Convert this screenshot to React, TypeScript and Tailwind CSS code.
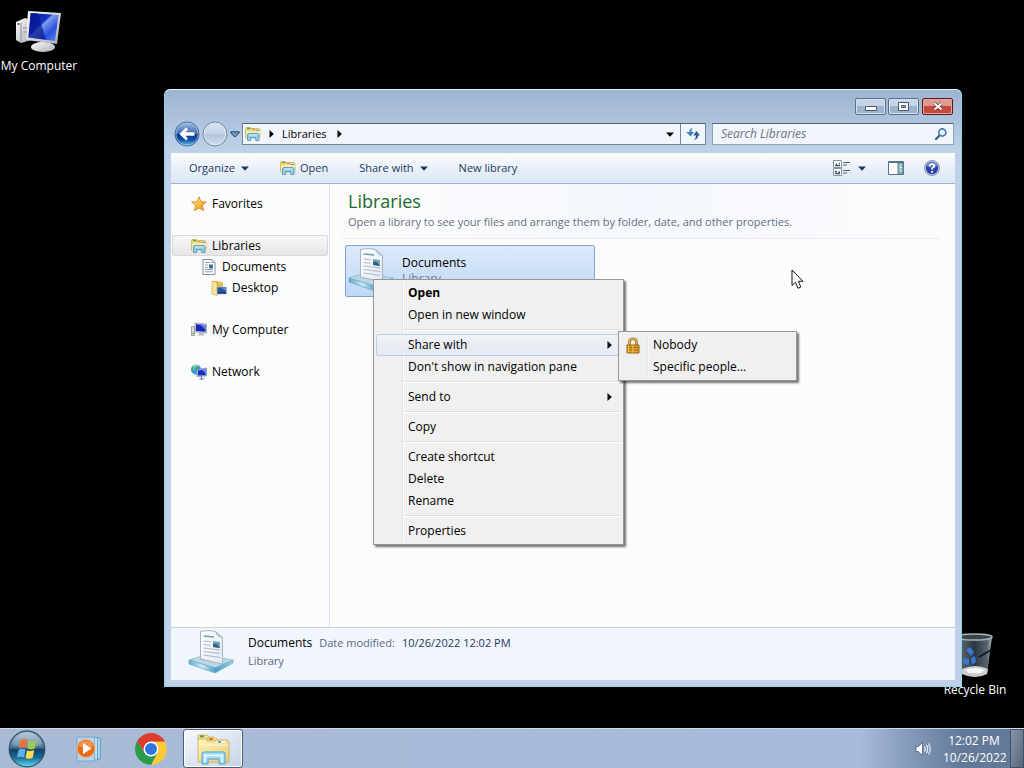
import React from "react";

// ---------- Icons ----------

type IconProps = { className?: string };

const ComputerIcon: React.FC<IconProps> = ({ className }) => (
  <svg className={className} viewBox="0 0 48 48" aria-hidden="true">
    <defs>
      <linearGradient id="pc-screen" x1="0" y1="0" x2="1" y2="1">
        <stop offset="0" stopColor="#0a1f9e" />
        <stop offset="0.4" stopColor="#1230c4" />
        <stop offset="0.45" stopColor="#7f9df0" />
        <stop offset="0.7" stopColor="#2a4fe0" />
        <stop offset="1" stopColor="#5c8cf5" />
      </linearGradient>
      <linearGradient id="pc-metal" x1="0" y1="0" x2="1" y2="1">
        <stop offset="0" stopColor="#ffffff" />
        <stop offset="1" stopColor="#a9adb3" />
      </linearGradient>
    </defs>
    <path d="M1 14 L10 10 L16 12 V32 L6 35 L1 32 Z" fill="url(#pc-metal)" />
    <path d="M6 15 V34 M8 20 H14 M8 24 H14" stroke="#8a8f96" strokeWidth="1" />
    <circle cx="3.500" cy="16" r="1" fill="#444" />
    <path d="M26 34 L35 36 L34 41 L26 41 Z" fill="#c9ccd1" />
    <ellipse cx="28" cy="39" rx="12" ry="5" fill="url(#pc-metal)" />
    <path d="M13 3 L46 5 L42 36 L11 32 Z" fill="url(#pc-metal)" />
    <path d="M15.500 5 L43.500 7 L40 33 L13.500 29.500 Z" fill="url(#pc-screen)" />
    <path d="M16 5 L23 5.600 L31 31.800 L13.500 29.500 Z" fill="#07168c" opacity="0.7" />
  </svg>
);

const SmallComputerIcon: React.FC<IconProps> = ({ className }) => (
  <svg className={className} viewBox="0 0 16 16" aria-hidden="true">
    <path d="M0.500 4.500 H3.500 V13.500 H0.500 Z" fill="#d6dade" stroke="#8d949c" strokeWidth="0.800" />
    <circle cx="2" cy="11.500" r="0.800" fill="#4fae3a" />
    <path d="M4 1 L15.500 2 V11 L4 10 Z" fill="#c8d0e4" stroke="#7d8799" strokeWidth="0.600" />
    <path d="M5 2.200 L14.500 3 V9.800 L5 9 Z" fill="#1a25b4" />
    <path d="M9 2.500 L14.500 3 V8 Z" fill="#6483ea" />
    <path d="M8.500 10.500 H12 L13.500 13.500 H6.500 Z" fill="#b4bac4" />
  </svg>
);

const NetworkIcon: React.FC<IconProps> = ({ className }) => (
  <svg className={className} viewBox="0 0 16 16" aria-hidden="true">
    <circle cx="5" cy="5.500" r="4.700" fill="#3a9ad6" stroke="#2873a8" strokeWidth="0.500" />
    <path d="M1.500 3.500 Q4 0.500 6.500 1.500 L5 4 L2 6.500 Z M5 6 L8 7 L5 9.800 Z" fill="#58c070" />
    <path d="M2 2.600 Q5 0 7 1.600" stroke="#c8f0f0" fill="none" />
    <path d="M6 5.500 L15.500 4 V12 L6 12.500 Z" fill="#b8c6e8" stroke="#5a6b94" strokeWidth="0.500" />
    <path d="M7 6.400 L14.600 5.100 V11.200 L7 11.600 Z" fill="#1730c4" />
    <path d="M11 5.700 L14.600 5.100 V9 Z" fill="#7898f0" />
    <path d="M10.500 12.500 V14.500 M8.500 15 H13" stroke="#5f748f" strokeWidth="1.200" />
  </svg>
);

const LibraryIcon: React.FC<IconProps> = ({ className }) => (
  <svg className={className} viewBox="0 0 16 16" aria-hidden="true">
    <path d="M0.500 2.500 L1 1.500 H5.500 L6.500 2.500 H14 L15 3.500 V12 H0.500 Z" fill="#eed684" stroke="#c9aa55" strokeWidth="0.700" />
    <path d="M2 2.500 H5.500" stroke="#4fb043" strokeWidth="1.200" />
    <path d="M7 3.600 H10" stroke="#e98e4d" />
    <path d="M11 4.500 H14" stroke="#5e9be0" />
    <path d="M1 5 H15 V12 H1 Z" fill="#f9ebaa" />
    <path d="M2.500 14.500 V9 Q2.500 7.500 4 7.500 H12.500 Q14 7.500 14 9 V14.500 H10.700 V11.500 H5.800 V14.500 Z" fill="#8fcdea" stroke="#4d93b8" strokeWidth="0.800" />
    <path d="M4 9 H12.500" stroke="#d8f3ff" />
  </svg>
);

const ExplorerIcon: React.FC<IconProps> = ({ className }) => (
  <svg className={className} viewBox="0 0 36 34" aria-hidden="true">
    <defs>
      <linearGradient id="folder" x1="0" y1="0" x2="1" y2="1">
        <stop offset="0" stopColor="#fff3b5" />
        <stop offset="1" stopColor="#e5cf7c" />
      </linearGradient>
    </defs>
    <path d="M3 6 V3 H12 L14 5 H19 V8 H3 Z" fill="#f4de8e" stroke="#c9ab55" strokeWidth="0.700" />
    <path d="M5 4.300 H9" stroke="#3da64a" strokeWidth="2" />
    <path d="M12 6 H21 L23 8 H28 V12 H12 Z" fill="#f6e49a" stroke="#c9ab55" strokeWidth="0.700" />
    <path d="M14 7.200 H18" stroke="#df5930" strokeWidth="1.600" />
    <path d="M3 7 H12 V9 H20 V8 H32 L34 10 V30 H3 Z" fill="url(#folder)" stroke="#c9ab55" strokeWidth="0.800" />
    <path d="M22 10 H30" stroke="#fff" strokeWidth="2" />
    <path d="M23 10 H26" stroke="#3c8ad0" strokeWidth="1.600" />
    <path d="M4 13 H33" stroke="#fff6c9" />
    <path d="M7 32 V22 Q7 20 9 20 H28 Q30 20 30 22 V32 H24 V27 H13 V32 Z" fill="#a5def4" stroke="#4e9fc9" strokeWidth="1" />
    <path d="M9 23.500 H28 M10 23 V30 M27 23 V30" stroke="#e7fbff" strokeWidth="1.500" />
  </svg>
);

const StarIcon: React.FC<IconProps> = ({ className }) => (
  <svg className={className} viewBox="0 0 16 16" aria-hidden="true">
    <defs>
      <linearGradient id="star" x1="0" y1="0" x2="1" y2="1">
        <stop offset="0" stopColor="#fff2a8" />
        <stop offset="0.500" stopColor="#fbbf42" />
        <stop offset="1" stopColor="#ea8418" />
      </linearGradient>
    </defs>
    <path d="M8 0.800 L10 5.600 L15.400 6 L11.300 9.500 L12.700 14.800 L8 12 L3.300 14.800 L4.700 9.500 L0.600 6 L6 5.600 Z" fill="url(#star)" stroke="#d3842a" strokeWidth="0.800" strokeLinejoin="round" />
  </svg>
);

const DocumentIcon: React.FC<IconProps> = ({ className }) => (
  <svg className={className} viewBox="0 0 16 16" aria-hidden="true">
    <path d="M2 0.500 H11 L14 3.500 V15.500 H2 Z" fill="#fff" stroke="#8391a0" />
    <path d="M11 0.500 V3.500 H14" fill="#dfe7ee" stroke="#8391a0" strokeWidth="0.800" />
    <path d="M4 3.500 H9 M4 6 H7 M4 8.500 H7 M4 10.500 H12 M4 12.800 H12" stroke="#8d9dae" />
    <path d="M8 5.500 H12 V9.500 H8 Z" fill="#3e7199" />
  </svg>
);

const DesktopFolderIcon: React.FC<IconProps> = ({ className }) => (
  <svg className={className} viewBox="0 0 16 16" aria-hidden="true">
    <path d="M1 1 H7 L9 2 H12 V14 H1 Z" fill="#e3bd55" />
    <path d="M1 1 L6 2.500 V15.500 L1 14 Z" fill="#f9e694" stroke="#c8a446" strokeWidth="0.600" />
    <path d="M6 7 H15.500 V14 H6 Z" fill="#245799" stroke="#b9cade" strokeWidth="0.700" />
    <path d="M9 7.500 H15 V11 Z" fill="#4f8bd0" />
    <path d="M6.500 13 H15" stroke="#1a3158" />
  </svg>
);

const DocumentsLibraryIcon: React.FC<IconProps> = ({ className }) => (
  <svg className={className} viewBox="0 0 48 48" aria-hidden="true">
    <defs>
      <linearGradient id="tray" x1="0" y1="0" x2="1" y2="0">
        <stop offset="0" stopColor="#5fa9cc" />
        <stop offset="0.300" stopColor="#c9eaf5" />
        <stop offset="0.600" stopColor="#4c9fc2" />
        <stop offset="1" stopColor="#9bd3e8" />
      </linearGradient>
      <linearGradient id="sheet" x1="0" y1="0" x2="1" y2="1">
        <stop offset="0" stopColor="#ffffff" />
        <stop offset="1" stopColor="#dfe8f3" />
      </linearGradient>
    </defs>
    <path d="M2 32 L18 27 L46 32 L28 40 Z" fill="#b9d8e8" stroke="#91b4c8" strokeWidth="0.700" />
    <path d="M2 32 L28 40 L46 32 V35 L28 45 L2 36 Z" fill="url(#tray)" stroke="#6fa7c2" strokeWidth="0.700" />
    <path d="M13.500 3.500 Q24 1.500 29 4 L35.500 9.500 V36 L13.500 31 Z" fill="url(#sheet)" stroke="#a0aaba" strokeWidth="0.900" />
    <path d="M29 4 Q29.500 9 35.500 9.500 Z" fill="#c7dbe8" stroke="#98adbd" strokeWidth="0.600" />
    <path d="M16.500 8 L27 9" stroke="#6fa39d" strokeWidth="1.600" />
    <path d="M16.500 13 L23.500 13.800 M16.500 16.500 L23.500 17.300 M16.500 20 L33 22 M16.500 23.500 L33 25.500 M16.500 27 L33 29.500" stroke="#aeb7c6" strokeWidth="1" />
    <path d="M26 13 L33 14 V20 L26 19 Z" fill="#74a6bb" />
    <path d="M26 16 L29.500 15.500 L33 20 L26 19 Z" fill="#356078" />
  </svg>
);

const PadlockIcon: React.FC<IconProps> = ({ className }) => (
  <svg className={className} viewBox="0 0 16 16" aria-hidden="true">
    <path d="M4.500 8 V4.500 Q4.500 1.200 8 1.200 Q11.500 1.200 11.500 4.500 V8" fill="none" stroke="#8a6518" strokeWidth="2.600" />
    <path d="M4.500 8 V4.500 Q4.500 1.200 8 1.200 Q11.500 1.200 11.500 4.500 V8" fill="none" stroke="#e2c164" strokeWidth="1.200" />
    <path d="M2 7.500 H14 V15.500 H2 Z" fill="#e0a028" stroke="#965f0c" />
    <path d="M2.500 10 H13.500 M2.500 12.500 H13.500" stroke="#a96c10" />
    <path d="M3.500 8 V15 M8 8 V15" stroke="#f4cb5c" />
  </svg>
);

const ViewIcon: React.FC<IconProps> = ({ className }) => (
  <svg className={className} viewBox="0 0 17 16" aria-hidden="true">
    <path d="M0.500 0.500 H8.500 V7.500 H0.500 Z M0.500 8.500 H8.500 V15.500 H0.500 Z" fill="#fff" stroke="#8793a3" />
    <path d="M2 5.500 H7 M3 4 H4 M6 3.500 H7 M2 13.500 H7 M2 11.500 H4 M5.500 12 H7" stroke="#4b5663" strokeWidth="1.300" />
    <path d="M10 2.500 H17 M10 5 H14 M10 10.500 H17 M10 13 H14" stroke="#566273" />
  </svg>
);

const PaneIcon: React.FC<IconProps> = ({ className }) => (
  <svg className={className} viewBox="0 0 16 14" aria-hidden="true">
    <path d="M0.500 0.500 H15.500 V13.500 H0.500 Z" fill="#fff" stroke="#5d7284" />
    <path d="M0.500 1.500 H15.500" stroke="#5d7284" />
    <path d="M10 2 H15 V13 H10 Z" fill="#8ec0c6" stroke="#5d7f8c" />
    <path d="M12 4 H14 M12 6.500 H14 M12 9 H14" stroke="#e2f5f5" />
  </svg>
);

const HelpIcon: React.FC<IconProps> = ({ className }) => (
  <svg className={className} viewBox="0 0 16 16" aria-hidden="true">
    <circle cx="8" cy="8" r="7.500" fill="#cbd2e4" stroke="#7582a6" strokeWidth="0.800" />
    <circle cx="8" cy="8" r="6.200" fill="#2840a8" />
    <path d="M2.500 6.500 Q3 2.300 8 2.300 Q13 2.300 13.500 6.500 Q8 8.500 2.500 6.500 Z" fill="#6c86d8" />
    <path d="M5.800 6 Q6 4 8 4 Q10.300 4 10.300 6 Q10.300 7.200 8.100 8.300 V9.600" fill="none" stroke="#fff" strokeWidth="1.700" />
    <circle cx="8.100" cy="11.800" r="1.100" fill="#fff" />
  </svg>
);

const SearchIcon: React.FC<IconProps> = ({ className }) => (
  <svg className={className} viewBox="0 0 14 14" fill="none" aria-hidden="true">
    <path d="M2 12 L6 8" stroke="#2b6190" strokeWidth="2.200" strokeLinecap="round" />
    <circle cx="8.300" cy="5.500" r="3.600" fill="#e7f4ff" stroke="#4379a8" strokeWidth="1.600" />
  </svg>
);

const RefreshIcon: React.FC<IconProps> = ({ className }) => (
  <svg className={className} viewBox="0 0 14 12" aria-hidden="true">
    <path d="M6.500 0 Q3.300 0.600 3.300 4 H0.300 L4.500 8.500 L8.200 4 H5.500 Q5.300 2 6.500 0 Z" fill="#3f86bd" />
    <path d="M8 12 Q10 10.800 10 7.500 H7.200 L10.600 3 L14 7.500 H12.200 Q12.200 11 8 12 Z" fill="#2e5f93" />
  </svg>
);

const BackIcon: React.FC<IconProps> = ({ className }) => (
  <svg className={className} viewBox="0 0 26 26" aria-hidden="true">
    <defs>
      <linearGradient id="nav-blue" x1="0" y1="0" x2="0" y2="1">
        <stop offset="0" stopColor="#a3bde2" />
        <stop offset="0.480" stopColor="#3f6fb9" />
        <stop offset="0.500" stopColor="#0c3585" />
        <stop offset="0.750" stopColor="#1453ab" />
        <stop offset="1" stopColor="#5ed0f3" />
      </linearGradient>
    </defs>
    <circle cx="13" cy="13" r="12" fill="url(#nav-blue)" stroke="#456a9c" />
    <circle cx="13" cy="13" r="11" fill="none" stroke="#bcd2ec" opacity="0.600" />
    <path d="M5.500 13 L12 6.500 L14 8.500 L11.500 11.200 H20.500 V14.800 H11.500 L14 17.500 L12 19.500 Z" fill="#fff" />
  </svg>
);

const ForwardIcon: React.FC<IconProps> = ({ className }) => (
  <svg className={className} viewBox="0 0 26 26" aria-hidden="true">
    <defs>
      <linearGradient id="nav-grey" x1="0" y1="0" x2="0" y2="1">
        <stop offset="0" stopColor="#d7e2ef" />
        <stop offset="0.500" stopColor="#c6d4e5" />
        <stop offset="0.520" stopColor="#b4c5d9" />
        <stop offset="1" stopColor="#d4e1f0" />
      </linearGradient>
    </defs>
    <circle cx="13" cy="13" r="12" fill="url(#nav-grey)" stroke="#7386a0" />
    <circle cx="13" cy="13" r="10.800" fill="none" stroke="#dbe6f3" />
  </svg>
);

const CaretDown: React.FC<IconProps> = ({ className }) => (
  <svg className={className} viewBox="0 0 8 5" fill="currentColor" aria-hidden="true">
    <path d="M0 0.500 H8 L4 4.800 Z" />
  </svg>
);

const CaretRight: React.FC<IconProps> = ({ className }) => (
  <svg className={className} viewBox="0 0 5 8" fill="currentColor" aria-hidden="true">
    <path d="M0.500 0 V8 L4.800 4 Z" />
  </svg>
);

const StartOrb: React.FC<IconProps> = ({ className }) => (
  <svg className={className} viewBox="0 0 38 38" aria-hidden="true">
    <defs>
      <linearGradient id="orb" x1="0" y1="0" x2="0" y2="1">
        <stop offset="0" stopColor="#b2c4d2" />
        <stop offset="0.450" stopColor="#4c7896" />
        <stop offset="0.520" stopColor="#123f66" />
        <stop offset="0.750" stopColor="#1c6d9c" />
        <stop offset="1" stopColor="#62e2f2" />
      </linearGradient>
    </defs>
    <circle cx="19" cy="19" r="17.800" fill="url(#orb)" stroke="#304f6c" strokeWidth="1.200" />
    <path d="M4 14 Q8 3.500 19 3 Q30 3.500 34 14 Q19 22 4 14 Z" fill="#fff" opacity="0.180" />
    <path d="M12.500 10.500 Q16 8 19.500 10 L18 18 Q14.500 16.500 11 18.300 Z" fill="#ec7038" />
    <path d="M21 10.700 Q24.500 12.500 28.500 10.500 L26.700 18.500 Q23 20.300 19.400 18.700 Z" fill="#9bcb52" />
    <path d="M10.500 19.800 Q14 18 17.600 19.600 L16 27.500 Q12.500 26 9 27.800 Z" fill="#5cb0e8" />
    <path d="M19 20.200 Q22.500 22 26.300 20 L24.700 27.800 Q21 29.600 17.500 28 Z" fill="#ffd953" />
  </svg>
);

const MediaPlayerIcon: React.FC<IconProps> = ({ className }) => (
  <svg className={className} viewBox="0 0 26 26" aria-hidden="true">
    <path d="M10 2 H24.500 V23 H10 Z" fill="#a8d6ef" stroke="#5896bd" strokeWidth="0.800" />
    <path d="M8 1.500 H21.500 V24 H8 Z" fill="#b9e0f4" stroke="#5896bd" strokeWidth="0.800" />
    <path d="M1 1 H18.500 V25 H1 Z" fill="#b5d3ea" stroke="#6da2c4" strokeWidth="0.800" />
    <circle cx="10" cy="12.500" r="9" fill="#e96a18" stroke="#f6b27e" />
    <path d="M2.500 10 A8 8 0 0 1 17.500 10 Q10 14 2.500 10 Z" fill="#f8a35a" opacity="0.700" />
    <path d="M7 7 L15.500 12.500 L7 18 Z" fill="#fff" />
  </svg>
);

const ChromeIcon: React.FC<IconProps> = ({ className }) => (
  <svg className={className} viewBox="0 0 32 32" aria-hidden="true">
    <path d="M16 8.500 H29.900 A16 16 0 0 1 16 32 L22.500 19.750 Z" fill="#fdcb37" />
    <path d="M2.144 8 A16 16 0 0 0 16 32 L22.500 19.750 L16 23.500 L9.500 19.750 Z" fill="#2c9b4a" />
    <path d="M2.144 8 A16 16 0 0 1 29.856 8 L30 8.500 H16 L9.500 19.750 Z" fill="#dd3b2b" />
    <circle cx="16" cy="16" r="7.500" fill="#fff" />
    <circle cx="16" cy="16" r="6" fill="#3474e0" />
  </svg>
);

const SpeakerIcon: React.FC<IconProps> = ({ className }) => (
  <svg className={className} viewBox="0 0 16 16" fill="none" aria-hidden="true">
    <path d="M1 5.500 H3.500 L7.500 1.500 V14.500 L3.500 10.500 H1 Z" fill="#fff" stroke="#3d516e" strokeWidth="0.700" />
    <path d="M9.500 5.500 Q11 8 9.500 10.500 M11.500 4 Q14 8 11.500 12 M13.500 2.500 Q17 8 13.500 13.500" stroke="#f2f6fc" strokeWidth="1.100" />
  </svg>
);

const RecycleBinIcon: React.FC<IconProps> = ({ className }) => (
  <svg className={className} viewBox="0 0 40 48" aria-hidden="true">
    <defs>
      <linearGradient id="bin" x1="0" y1="0" x2="1" y2="0">
        <stop offset="0" stopColor="#66727b" />
        <stop offset="0.500" stopColor="#2b363e" />
        <stop offset="0.850" stopColor="#56636c" />
        <stop offset="1" stopColor="#a7b4bb" />
      </linearGradient>
    </defs>
    <path d="M2 5 L7 42 Q20 48 32 42 L37 5 Z" fill="url(#bin)" />
    <path d="M7 37 Q20 31 33 37 L32 42 Q20 48 7 42 Z" fill="#c9cdcf" />
    <path d="M10 38 Q20 34 30 38 L26 41 H14 Z" fill="#f5f6f6" />
    <path d="M11 18 L15 15 L19 20 L16 24 Z M16 26 L20 24 L21 30 L17 33 Z M8 26 L14 27 L14 33 L9 32 Z" fill="#3a78d8" />
    <path d="M36 18 L24 25" stroke="#11181c" strokeWidth="2" />
    <ellipse cx="19.500" cy="5" rx="17.500" ry="3" fill="#39444b" stroke="#aab3b8" strokeWidth="1.500" />
  </svg>
);

const CursorIcon: React.FC<IconProps> = ({ className }) => (
  <svg className={className} viewBox="0 0 13 21" aria-hidden="true">
    <path d="M1 1 V16.500 L4.500 13.200 L7 19.300 L9.800 18 L7.300 12.300 H12 Z" fill="#fff" stroke="#111" strokeLinejoin="round" />
  </svg>
);

// ---------- Window parts ----------

const CAPTION_BUTTON =
  "flex h-[17px] w-[31px] items-center justify-center rounded-[2px] border border-[#5e7088] bg-linear-to-b from-[#c5d4e8] from-50% to-[#9fb3ce] to-50% shadow-[inset_0_0_0_1px_#d5e1f0]";

const TitleBar: React.FC = () => (
  <div className="flex h-[25px] justify-end gap-[2px] pt-[8px] pr-[2px]">
    <button type="button" aria-label="Minimize" className={CAPTION_BUTTON}>
      <svg className="mt-[3px] h-[5px] w-[12px]" viewBox="0 0 12 5" aria-hidden="true">
        <path d="M0.500 0.500 H11.500 V4.500 H0.500 Z" fill="#fff" stroke="#4a586d" />
      </svg>
    </button>
    <button type="button" aria-label="Maximize" className={CAPTION_BUTTON}>
      <svg className="h-[9px] w-[11px]" viewBox="0 0 11 9" aria-hidden="true">
        <path d="M0.500 0.500 H10.500 V8.500 H0.500 Z M3.500 3.500 V5.500 H7.500 V3.500 Z" fill="#fff" fillRule="evenodd" stroke="#4a586d" />
      </svg>
    </button>
    <button
      type="button"
      aria-label="Close"
      className="ml-px flex h-[17px] w-[31px] items-center justify-center rounded-[2px] border border-[#5b1a22] bg-linear-to-b from-[#dd9a8e] from-50% to-[#c5493a] to-50% shadow-[inset_0_0_0_1px_#e6a89d]"
    >
      <svg className="h-[9px] w-[12px]" viewBox="0 0 12 9" aria-hidden="true">
        <path d="M2.500 1.500 L9.500 7.500 M9.500 1.500 L2.500 7.500" stroke="#5b3038" strokeWidth="3.600" />
        <path d="M2.500 1.500 L9.500 7.500 M9.500 1.500 L2.500 7.500" stroke="#fff" strokeWidth="2.200" />
      </svg>
    </button>
  </div>
);

const AddressRow: React.FC = () => (
  <div className="flex h-[38px] items-center pr-px">
    <div className="flex items-center pl-[3px]">
      <button type="button" aria-label="Back" className="rounded-full">
        <BackIcon className="size-[26px]" />
      </button>
      <button type="button" aria-label="Forward" className="ml-[2px] rounded-full">
        <ForwardIcon className="size-[26px]" />
      </button>
    </div>
    <button type="button" aria-label="Recent pages" className="mx-[2px]">
      <svg className="h-[7px] w-[10px]" viewBox="0 0 10 7" aria-hidden="true">
        <path d="M0.800 0.800 H9.200 V2 L5 6 L0.800 2 Z" fill="#6d9bc8" stroke="#27456b" />
      </svg>
    </button>
    <div className="flex h-[22px] flex-1 items-stretch border border-[#74859c] border-t-[#526379] bg-[#f1f5fc] text-[11px]">
      <div className="flex flex-1 items-center pl-[2px]">
        <LibraryIcon className="size-4" />
        <CaretRight className="ml-2 h-[8px] w-[5px]" />
        <button type="button" className="ml-2">Libraries</button>
        <CaretRight className="ml-[10px] h-[8px] w-[5px]" />
      </div>
      <button type="button" aria-label="Previous locations" className="px-[6px]">
        <CaretDown className="h-[5px] w-[8px]" />
      </button>
      <button type="button" aria-label="Refresh" className="border-l border-[#74859c] px-[5px]">
        <RefreshIcon className="h-[12px] w-[14px]" />
      </button>
    </div>
    <label className="ml-[6px] flex h-[22px] w-[242px] items-center border border-[#8fa2bb] border-t-[#526379] bg-[#f1f5fc] pr-[5px] pl-2">
      <input
        type="search"
        aria-label="Search Libraries"
        placeholder="Search Libraries"
        className="min-w-0 flex-1 bg-transparent italic outline-none placeholder:text-[#6d7480]"
      />
      <SearchIcon className="size-[14px]" />
    </label>
  </div>
);

const Toolbar: React.FC = () => (
  <div className="flex h-[31px] items-center border-b border-[#a3b2c8] bg-linear-to-b from-[#fdfeff] via-[#eaf0f9] to-[#dce6f4] pr-[15px] pl-[18px] text-[11px] text-[#1e395b]">
    <button type="button" className="flex items-center gap-[6px]">
      Organize
      <CaretDown className="h-[5px] w-[8px]" />
    </button>
    <button type="button" className="ml-[31px] flex items-center gap-1">
      <LibraryIcon className="size-4" />
      Open
    </button>
    <button type="button" className="ml-[31px] flex items-center gap-[6px]">
      Share with
      <CaretDown className="h-[5px] w-[8px]" />
    </button>
    <button type="button" className="ml-[31px]">New library</button>
    <div className="ml-auto flex items-center">
      <button type="button" aria-label="Change your view">
        <ViewIcon className="h-[16px] w-[17px]" />
      </button>
      <button type="button" aria-label="More options" className="ml-2">
        <CaretDown className="h-[5px] w-[8px]" />
      </button>
      <button type="button" aria-label="Show the preview pane" className="ml-[22px]">
        <PaneIcon className="h-[14px] w-[16px]" />
      </button>
      <button type="button" aria-label="Get help" className="ml-5">
        <HelpIcon className="size-4" />
      </button>
    </div>
  </div>
);

const NAV_ROW = "flex h-[21px] items-center gap-[5px] border border-transparent";

const NavigationPane: React.FC = () => (
  <nav className="flex w-[159px] shrink-0 flex-col gap-[21px] border-r border-[#d6e0ef] pt-[9px] pl-px text-black">
    <a href="#favorites" className={`${NAV_ROW} pl-[18px]`}>
      <StarIcon className="size-4" />
      Favorites
    </a>
    <div>
      <a
        href="#libraries"
        className="mr-px flex h-[21px] items-center gap-[5px] rounded-[2px] border border-[#d9d9d9] bg-linear-to-b from-[#f8f8f8] to-[#e5e5e5] pl-[18px]"
      >
        <LibraryIcon className="size-4" />
        Libraries
      </a>
      <a href="#documents" className={`${NAV_ROW} pl-[28px]`}>
        <DocumentIcon className="size-4" />
        Documents
      </a>
      <a href="#desktop" className={`${NAV_ROW} pl-[38px]`}>
        <DesktopFolderIcon className="size-4" />
        Desktop
      </a>
    </div>
    <a href="#computer" className={`${NAV_ROW} pl-[18px]`}>
      <SmallComputerIcon className="size-4" />
      My Computer
    </a>
    <a href="#network" className={`${NAV_ROW} pl-[18px]`}>
      <NetworkIcon className="size-4" />
      Network
    </a>
  </nav>
);

const LibraryView: React.FC = () => (
  <main className="min-w-0 flex-1">
    <header className="mr-[15px] ml-3 border-b border-[#e6ebf1] bg-linear-to-r from-[#fcfcfc] via-[#f4f7fd] to-[#fcfcfc] pt-1 pb-2 pl-[6px]">
      <h1 className="text-[18px] leading-[26px] text-[#1c6b2a]">Libraries</h1>
      <p className="text-[11px] leading-4 text-[#66707d]">
        Open a library to see your files and arrange them by folder, date, and other properties.
      </p>
    </header>
    <button
      type="button"
      className="mt-[6px] ml-[15px] flex h-[52px] w-[250px] gap-[7px] rounded-[2px] border border-[#84a4cf] bg-linear-to-b from-[#dce9fb] to-[#c0d8f8] pl-px text-left"
    >
      <DocumentsLibraryIcon className="size-12" />
      <span className="flex flex-col pt-[9px] leading-4">
        <span className="text-black">Documents</span>
        <span className="text-[#6d7d93]">Library</span>
      </span>
    </button>
  </main>
);

const DetailsPane: React.FC = () => (
  <footer className="flex h-[53px] border-t border-[#c8d3e2] bg-[#f1f5fc] pl-4">
    <DocumentsLibraryIcon className="size-12" />
    <div className="pt-[6px] pl-[13px] text-[11px] leading-[18px]">
      <p className="flex gap-[7px]">
        <span className="text-[12px] text-black">Documents</span>
        <span className="text-[#5b6b80]">Date modified:</span>
        <span className="text-[#1e395b]">10/26/2022 12:02 PM</span>
      </p>
      <p className="text-[#5b6b80]">Library</p>
    </div>
  </footer>
);

// ---------- Context menus ----------

type MenuEntry = { label: string; bold?: boolean; submenu?: boolean; active?: boolean };

const MENU_GROUPS: MenuEntry[][] = [
  [{ label: "Open", bold: true }, { label: "Open in new window" }],
  [{ label: "Share with", submenu: true, active: true }, { label: "Don't show in navigation pane" }],
  [{ label: "Send to", submenu: true }],
  [{ label: "Copy" }],
  [{ label: "Create shortcut" }, { label: "Delete" }, { label: "Rename" }],
  [{ label: "Properties" }],
];

const MENU_FRAME =
  "absolute border border-[#979797] bg-[#f0f0f0] p-[2px] text-black shadow-[2px_2px_2px_rgba(0,0,0,0.55)]";

const ContextMenu: React.FC = () => (
  <div role="menu" className={`${MENU_FRAME} top-[279px] left-[373px] w-[251px]`}>
    <div className="absolute inset-y-[2px] left-[28px] w-[2px] border-l border-[#e2e3e3] bg-white" />
    {MENU_GROUPS.map((group, i) => (
      <div key={group[0].label} className="relative">
        {i > 0 && (
          <div className="flex h-2 items-center pl-[27px]">
            <div className="h-[2px] flex-1 border-t border-[#e0e0e0] bg-white" />
          </div>
        )}
        {group.map((entry) => (
          <button
            key={entry.label}
            type="button"
            role="menuitem"
            className={`flex h-[22px] w-full items-center justify-between rounded-[2px] border pr-2 pl-[31px] ${
              entry.active
                ? "border-[#b9cfe9] bg-linear-to-b from-[#f0f3f8]/80 to-[#e0e9f5]/80"
                : "border-transparent"
            } ${entry.bold ? "font-bold" : ""}`}
          >
            {entry.label}
            {entry.submenu && <CaretRight className="h-[8px] w-[5px]" />}
          </button>
        ))}
      </div>
    ))}
  </div>
);

const ShareSubmenu: React.FC = () => (
  <div role="menu" className={`${MENU_FRAME} top-[331px] left-[618px] w-[179px]`}>
    <div className="absolute inset-y-[2px] left-[28px] w-[2px] border-l border-[#e9e9e9] bg-[#f6f6f6]" />
    <button type="button" role="menuitem" className="relative flex h-[22px] w-full items-center gap-3 pl-1">
      <PadlockIcon className="h-[17px] w-[16px]" />
      Nobody
    </button>
    <button type="button" role="menuitem" className="relative flex h-[22px] w-full items-center pl-8">
      Specific people...
    </button>
  </div>
);

// ---------- Taskbar ----------

const Taskbar: React.FC = () => (
  <div className="flex h-10 shrink-0 items-center border-t border-[#cdd9e9] bg-linear-to-r from-[#a9bad4] via-[#a7bbdb] via-84% to-[#627997] to-94% text-white">
    <button type="button" aria-label="Start" className="ml-2">
      <StartOrb className="size-[38px]" />
    </button>
    <button type="button" aria-label="Media Player" className="ml-[30px]">
      <MediaPlayerIcon className="size-[26px]" />
    </button>
    <button type="button" aria-label="Chrome" className="ml-[33px]">
      <ChromeIcon className="size-8" />
    </button>
    <button
      type="button"
      aria-label="Explorer"
      className="ml-4 flex h-[39px] w-[60px] items-center justify-center rounded-[3px] border border-[#4c5d74] bg-linear-to-br from-[#f7f9fc] to-[#c5d3e7] shadow-[inset_0_0_0_1px_#ffffff]"
    >
      <ExplorerIcon className="h-[34px] w-[36px]" />
    </button>
    <div className="ml-auto flex h-full items-center">
      <button type="button" aria-label="Volume">
        <SpeakerIcon className="size-4" />
      </button>
      <div className="ml-3 w-[62px] text-center leading-[17px]">
        <div>12:02 PM</div>
        <div>10/26/2022</div>
      </div>
      <button
        type="button"
        aria-label="Show desktop"
        className="ml-[5px] h-full w-[14px] border border-[#3e4f66] bg-linear-to-br from-[#8796a9] to-[#56687f]"
      />
    </div>
  </div>
);

const App: React.FC = () => (
  <div className="relative flex h-screen flex-col overflow-hidden bg-black font-['Open_Sans','Noto_Sans',sans-serif] text-[12px] leading-4 text-black">
    <div className="relative flex-1">
      <button type="button" className="absolute top-[8px] left-0 flex w-[78px] flex-col items-center gap-[2px] text-white">
        <ComputerIcon className="size-12" />
        My Computer
      </button>

      <button type="button" className="absolute right-[14px] bottom-[30px] flex w-[70px] flex-col items-center gap-[2px] text-white">
        <RecycleBinIcon className="h-12 w-10" />
        Recycle Bin
      </button>

      <section
        aria-label="Libraries"
        className="absolute top-[89px] right-[62px] bottom-[41px] left-[164px] flex flex-col rounded-t-[6px] border border-[#8fd3ea] border-t-[#eaf3fb] bg-[#bfd1e9] bg-linear-to-b from-[#9db4d1] to-[#bfd1e9] to-[60px] px-[6px] pb-[6px]"
      >
        <TitleBar />
        <AddressRow />
        <Toolbar />
        <div className="flex min-h-0 flex-1 bg-[#fcfcfc]">
          <NavigationPane />
          <LibraryView />
        </div>
        <DetailsPane />
      </section>

      <ContextMenu />
      <ShareSubmenu />
      <CursorIcon className="pointer-events-none absolute top-[269px] left-[791px] h-[21px] w-[13px]" />
    </div>
    <Taskbar />
  </div>
);

export default App;
